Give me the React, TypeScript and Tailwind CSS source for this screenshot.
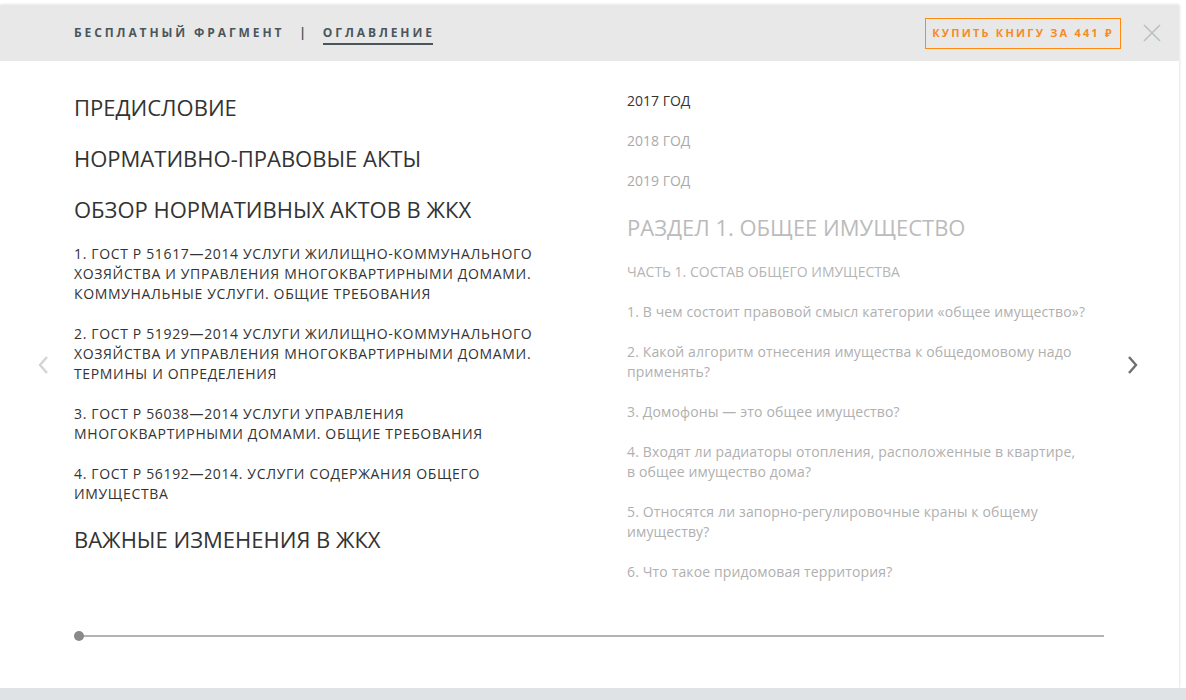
import React from "react";

const leftItems = [
  [
    "1. ГОСТ Р 51617—2014 УСЛУГИ ЖИЛИЩНО-КОММУНАЛЬНОГО",
    "ХОЗЯЙСТВА И УПРАВЛЕНИЯ МНОГОКВАРТИРНЫМИ ДОМАМИ.",
    "КОММУНАЛЬНЫЕ УСЛУГИ. ОБЩИЕ ТРЕБОВАНИЯ",
  ],
  [
    "2. ГОСТ Р 51929—2014 УСЛУГИ ЖИЛИЩНО-КОММУНАЛЬНОГО",
    "ХОЗЯЙСТВА И УПРАВЛЕНИЯ МНОГОКВАРТИРНЫМИ ДОМАМИ.",
    "ТЕРМИНЫ И ОПРЕДЕЛЕНИЯ",
  ],
  ["3. ГОСТ Р 56038—2014 УСЛУГИ УПРАВЛЕНИЯ", "МНОГОКВАРТИРНЫМИ ДОМАМИ. ОБЩИЕ ТРЕБОВАНИЯ"],
  ["4. ГОСТ Р 56192—2014. УСЛУГИ СОДЕРЖАНИЯ ОБЩЕГО", "ИМУЩЕСТВА"],
];

const rightItems = [
  ["1. В чем состоит правовой смысл категории «общее имущество»?"],
  ["2. Какой алгоритм отнесения имущества к общедомовому надо", "применять?"],
  ["3. Домофоны — это общее имущество?"],
  ["4. Входят ли радиаторы отопления, расположенные в квартире,", "в общее имущество дома?"],
  ["5. Относятся ли запорно-регулировочные краны к общему", "имуществу?"],
  ["6. Что такое придомовая территория?"],
];

function LeftLines({ lines }: { lines: string[] }) {
  return (
    <div className="text-[14px] leading-[20px] tracking-[0.65px] whitespace-nowrap">
      {lines.map((l, i) => (
        <div key={i}>{l}</div>
      ))}
    </div>
  );
}

function RightLines({ lines }: { lines: string[] }) {
  return (
    <div className="text-[14px] leading-[20px] tracking-[0.14px] whitespace-nowrap">
      {lines.map((l, i) => (
        <div key={i}>{l}</div>
      ))}
    </div>
  );
}

export default function App() {
  return (
    <div
      className="w-[1186px] h-[700px] bg-white flex flex-col overflow-hidden"
      style={{ fontFamily: '"Open Sans", "Noto Sans", sans-serif' }}
    >
      <div className="flex-1 pt-[5px] flex min-h-0">
        <div className="w-[1179px] h-full bg-white shadow-[0_0_3px_rgba(0,0,0,0.18)] flex flex-col">
          {/* header */}
          <div className="h-[56px] bg-[#e8e8e8] flex items-center pl-[74px] pr-[18px] shrink-0">
            <div className="flex items-center text-[12px] font-bold tracking-[2.9px] text-[#4b565c]">
              <span>БЕСПЛАТНЫЙ ФРАГМЕНТ</span>
              <span className="ml-[15px] mr-[14px]">|</span>
              <span className="relative">
                ОГЛАВЛЕНИЕ
                <span className="absolute left-0 right-[2px] top-[19px] h-[2px] bg-[#4b565c]" />
              </span>
            </div>
            <div className="flex-1" />
            <div className="h-[31px] w-[196px] border border-[#ff8a0d] flex items-center justify-center text-[11px] font-bold tracking-[2.2px] text-[#f78b1f]">
              КУПИТЬ КНИГУ ЗА 441 ₽
            </div>
            <div className="ml-[22px] w-[18px] h-[18px] flex items-center justify-center">
              <svg width="18" height="18" viewBox="0 0 18 18">
                <path d="M1 1 L17 17 M17 1 L1 17" stroke="#b7c0c5" strokeWidth="1.6" fill="none" />
              </svg>
            </div>
          </div>

          {/* body */}
          <div className="relative flex-1 flex flex-col px-[74px] pt-[30px]">
            <div className="flex">
              <div className="w-[553px] text-[#333333] flex flex-col">
                <div className="text-[22px] leading-[32px] font-normal">ПРЕДИСЛОВИЕ</div>
                <div className="text-[22px] leading-[32px] mt-[19px]">НОРМАТИВНО-ПРАВОВЫЕ АКТЫ</div>
                <div className="text-[22px] leading-[32px] mt-[19px]">ОБЗОР НОРМАТИВНЫХ АКТОВ В ЖКХ</div>
                <div className="flex flex-col gap-[20px] mt-[19px]">
                  {leftItems.map((it, i) => (
                    <LeftLines key={i} lines={it} />
                  ))}
                </div>
                <div className="text-[22px] leading-[32px] mt-[19px]">ВАЖНЫЕ ИЗМЕНЕНИЯ В ЖКХ</div>
              </div>
              <div className="flex-1 flex flex-col">
                <div className="text-[14px] leading-[20px] text-[#333333]">2017 ГОД</div>
                <div className="text-[14px] leading-[20px] text-[#aaaaaa] mt-[20px]">2018 ГОД</div>
                <div className="text-[14px] leading-[20px] text-[#aaaaaa] mt-[20px]">2019 ГОД</div>
                <div className="text-[22px] leading-[30px] text-[#bbbbbb] mt-[21px]">РАЗДЕЛ 1. ОБЩЕЕ ИМУЩЕСТВО</div>
                <div className="text-[14px] leading-[20px] text-[#b5b5b5] mt-[20px]">ЧАСТЬ 1. СОСТАВ ОБЩЕГО ИМУЩЕСТВА</div>
                <div className="flex flex-col gap-[20px] mt-[20px] text-[#b0b0b0]">
                  {rightItems.map((it, i) => (
                    <RightLines key={i} lines={it} />
                  ))}
                </div>
              </div>
            </div>

            {/* slider */}
            <div className="mt-[49px] h-[10px] relative flex items-center w-[1030px]">
              <div className="h-[2px] flex-1 bg-[#b3b3b3]" />
              <div className="absolute left-0 top-0 w-[10px] h-[10px] rounded-full bg-[#8a8a8a]" />
            </div>

            {/* arrows */}
            <div className="absolute left-[36px] top-[294px]">
              <svg width="14" height="20" viewBox="0 0 14 20">
                <path d="M11 2 L4 10 L11 18" stroke="#d4d4d4" strokeWidth="2.4" fill="none" />
              </svg>
            </div>
            <div className="absolute left-[1126px] top-[294px]">
              <svg width="14" height="20" viewBox="0 0 14 20">
                <path d="M3 2 L10 10 L3 18" stroke="#6f6f6f" strokeWidth="2.4" fill="none" />
              </svg>
            </div>
          </div>
        </div>
      </div>
      <div className="h-[12px] bg-[#e0e3e6] shrink-0" />
    </div>
  );
}
